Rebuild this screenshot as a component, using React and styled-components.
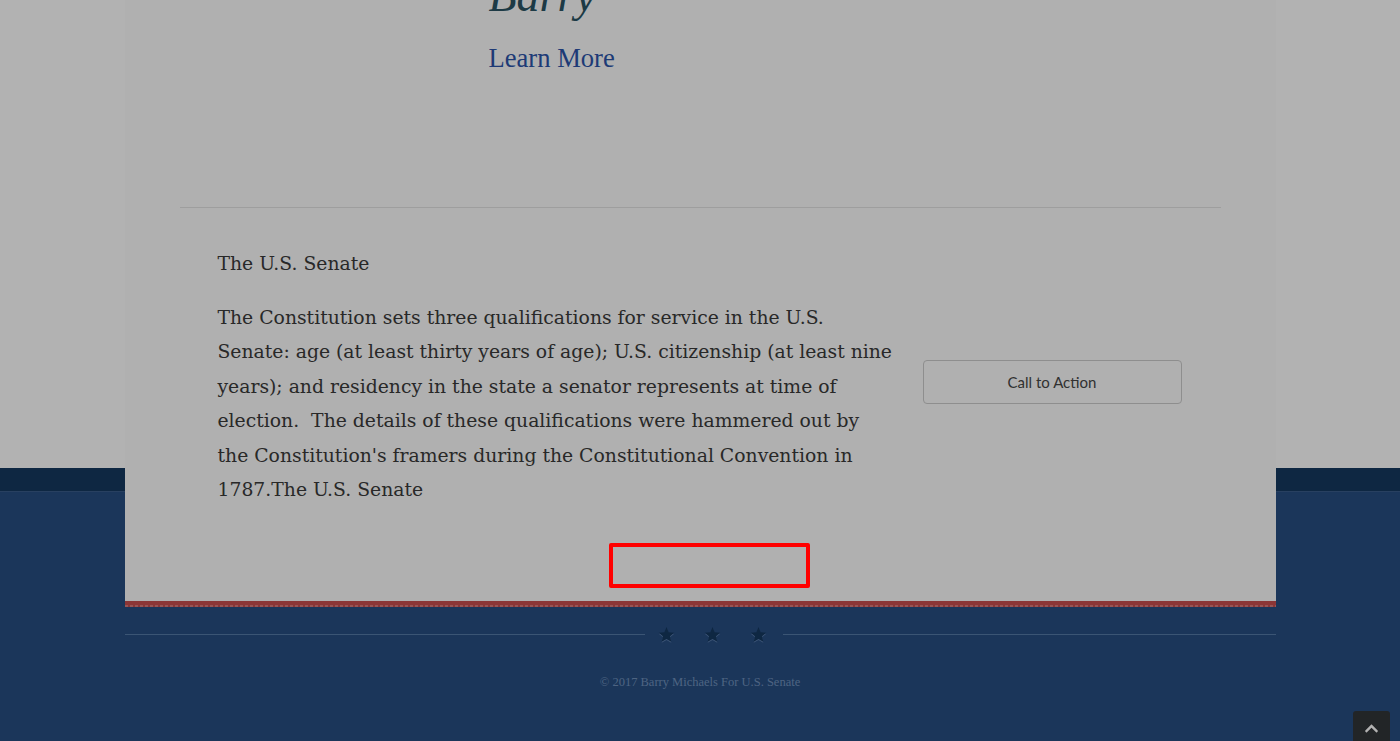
import React from "react";
import styled, { createGlobalStyle } from "styled-components";
import { FaChevronUp } from "react-icons/fa";

const GlobalStyle = createGlobalStyle`
  html, body {
    margin: 0;
    padding: 0;
    background: #ffffff;
    overflow: hidden;
  }
  body {
    font-family: "Liberation Serif", "Times New Roman", serif;
  }
`;

const Page = styled.div`
  min-height: 741px;
  display: flex;
  flex-direction: column;
  background: #ffffff;
`;

const Section = styled.section`
  display: flex;
  justify-content: center;
  height: 468px;
`;

const Card = styled.div`
  position: relative;
  z-index: 2;
  width: 1151px;
  height: 607px;
  box-sizing: border-box;
  background: #fcfcfc;
  border-bottom: 6px solid #c84e4e;
  padding: 0 55px;
  display: flex;
  flex-direction: column;
  align-self: flex-start;

  /* dotted edge on top of the red stripe */
  &::after {
    content: "";
    position: absolute;
    left: 0;
    right: 0;
    bottom: -6px;
    height: 2px;
    background: repeating-linear-gradient(
      to right,
      #d97a7a 0 3px,
      #c84e4e 3px 5px
    );
  }
`;

const Hero = styled.div`
  height: 207px;
  box-sizing: border-box;
  padding-left: 309px;
  margin-top: -31px;
  display: flex;
  flex-direction: column;
  align-items: flex-start;

  h2 {
    margin: 0;
    font-size: 46px;
    font-style: italic;
    font-weight: 400;
    line-height: 54px;
    color: #2a5463;
  }

  a {
    margin-top: 19px;
    font-size: 26.6px;
    line-height: 32px;
    color: #2b54aa;
    text-decoration: none;
  }
`;

const Rule = styled.hr`
  margin: 31px 0 0;
  border: 0;
  border-top: 1px solid #e3e3e3;
`;

const Content = styled.div`
  display: grid;
  grid-template-columns: 676px 259px;
  column-gap: 29px;
  align-items: center;
  padding: 39px 39px 0 38px;
  color: #3a3a3a;
  font-family: "DejaVu Serif", "Liberation Serif", serif;

  h4 {
    margin: 0 0 19px;
    font-size: 18.8px;
    font-weight: 400;
    line-height: 34.5px;
  }

  p {
    margin: 0 0 10px;
    font-size: 18.8px;
    line-height: 34.5px;
  }
`;

const ActionButton = styled.button`
  height: 44px;
  width: 259px;
  background: transparent;
  border: 1px solid #cccccc;
  border-radius: 4px;
  font-family: Lato, "Open Sans", sans-serif;
  font-size: 15px;
  color: #474747;
  cursor: pointer;
`;

const Footer = styled.footer`
  background: #274e82;
  flex: 1;
  display: flex;
  flex-direction: column;
  align-items: center;
`;

const FooterBand = styled.div`
  align-self: stretch;
  height: 23px;
  background: #15385f;
  border-bottom: 1px solid #3a5c8a;
`;

const Divider = styled.div`
  width: 1151px;
  margin-top: 134px;
  display: flex;
  align-items: center;
  gap: 13px;
`;

const DividerLine = styled.span`
  flex: ${({ $fixed }) => ($fixed ? `0 0 ${$fixed}px` : "1")};
  height: 1px;
  background: #557aa6;
`;

const Stars = styled.div`
  display: flex;
  gap: 29px;
  padding-right: 3px;

  svg {
    display: block;
    filter: drop-shadow(0 1px 0 rgba(150, 180, 225, 0.45));
  }
`;

const Copyright = styled.p`
  margin: 32px 0 0;
  font-size: 12.5px;
  color: #7090bb;
`;

const ScrollTop = styled.button`
  position: fixed;
  right: 10px;
  bottom: -4px;
  width: 37px;
  height: 34px;
  border: 0;
  border-radius: 3px 3px 0 0;
  background: #323538;
  color: #ffffff;
  display: flex;
  align-items: flex-start;
  justify-content: center;
  padding-top: 10px;
  box-sizing: border-box;
  z-index: 3;
`;

const Backdrop = styled.div`
  position: fixed;
  inset: 0;
  background: rgba(0, 0, 0, 0.3);
  z-index: 10;
`;

const FocusBox = styled.div`
  position: fixed;
  left: 609px;
  top: 543px;
  width: 201px;
  height: 45px;
  box-sizing: border-box;
  border: 4px solid #ff0000;
  border-radius: 2px;
  z-index: 11;
`;

function Star() {
  return (
    <svg width="17" height="17" viewBox="0 0 24 24" fill="#15385f">
      <path d="M12 1.5l3.1 7.2 7.8.7-5.9 5.2 1.8 7.6L12 18.2l-6.8 4 1.8-7.6-5.9-5.2 7.8-.7z" />
    </svg>
  );
}

export default function App() {
  return (
    <>
      <GlobalStyle />
      <Page>
        <Section>
          <Card>
            <Hero>
              <h2>Barry</h2>
              <a href="#learn">Learn More</a>
            </Hero>
            <Rule />
            <Content>
              <div>
                <h4>The U.S. Senate</h4>
                <p>
                  The Constitution sets three qualifications for service in the
                  U.S. Senate: age (at least thirty years of age); U.S.
                  citizenship (at least nine years); and residency in the state
                  a senator represents at time of election.&nbsp; The details of
                  these qualifications were hammered out by the Constitution's
                  framers during the Constitutional Convention in 1787.The U.S.
                  Senate
                </p>
              </div>
              <ActionButton>Call to Action</ActionButton>
            </Content>
          </Card>
        </Section>
        <Footer>
          <FooterBand />
          <Divider>
            <DividerLine $fixed={520} />
            <Stars>
              <Star />
              <Star />
              <Star />
            </Stars>
            <DividerLine />
          </Divider>
          <Copyright>© 2017 Barry Michaels For U.S. Senate</Copyright>
        </Footer>
        <ScrollTop aria-label="Back to top">
          <FaChevronUp size={15} />
        </ScrollTop>
      </Page>
      <Backdrop />
      <FocusBox />
    </>
  );
}
